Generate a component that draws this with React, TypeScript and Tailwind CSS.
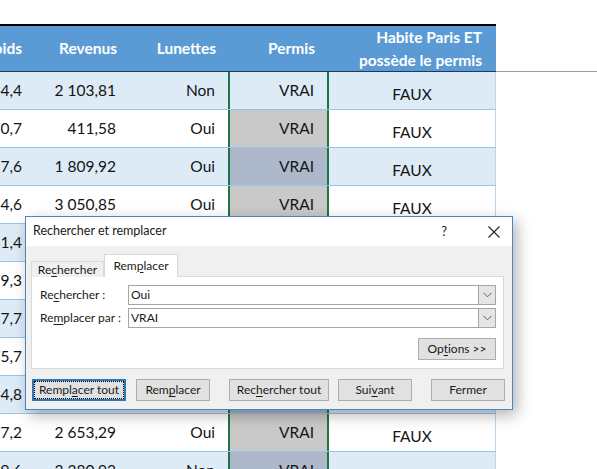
import React from "react";

const ROWS = [
  ["64,4", "2 103,81", "Non"],
  ["70,7", "411,58", "Oui"],
  ["57,6", "1 809,92", "Oui"],
  ["84,6", "3 050,85", "Oui"],
  ["61,4", "2 417,36", "Oui"],
  ["79,3", "1 954,10", "Non"],
  ["67,7", "2 880,47", "Oui"],
  ["75,7", "1 302,65", "Oui"],
  ["54,8", "2 211,09", "Non"],
  ["77,2", "2 653,29", "Oui"],
  ["69,6", "3 380,93", "Non"],
];

// underlined access key
const K = ({ children }: { children: React.ReactNode }) => (
  <span className="underline underline-offset-2 decoration-1">{children}</span>
);

function Btn({ children, w, focused = false, className = "" }: { children: React.ReactNode; w: string; focused?: boolean; className?: string }) {
  return (
    <div
      className={`${w} h-[22px] shrink-0 flex items-center justify-center bg-[#e1e1e1] ${
        focused ? "border-2 border-[#2f77b8]" : "border border-[#adadad]"
      } ${className}`}
    >
      {focused ? (
        <div className="w-full h-full flex items-center justify-center border border-dotted border-black">{children}</div>
      ) : (
        children
      )}
    </div>
  );
}

function Combo({ value }: { value: string }) {
  return (
    <div className="w-[368px] h-[20px] flex border border-[#a5a5a5] bg-white">
      <div className="flex-1 flex items-center pl-[2px]">{value}</div>
      <div className="w-[17px] h-full flex items-center justify-center bg-[#e5e5e5] border-l border-[#a5a5a5]">
        <svg width="9" height="6" viewBox="0 0 9 6" fill="none">
          <path d="M0.5 0.8 L4.5 4.8 L8.5 0.8" stroke="#606060" strokeWidth="1" />
        </svg>
      </div>
    </div>
  );
}

function Dialog() {
  return (
    <div className="absolute left-[25px] top-[216px] w-[488px] h-[194px] flex flex-col border border-[#4a86c0] bg-[#f0f0f0] shadow-[4px_5px_14px_rgba(0,0,0,0.3)] font-['Lato',sans-serif] text-[12px] text-[#1a1a1a]">
      <div className="h-[29px] shrink-0 bg-white flex items-center pl-[7px] pr-[12px]">
        <span className="text-[12.5px]">Rechercher et remplacer</span>
        <span className="ml-auto mr-[41px] text-[13px]">?</span>
        <svg width="12" height="12" viewBox="0 0 12 12">
          <path d="M0.5 0.5 L11.5 11.5 M11.5 0.5 L0.5 11.5" stroke="#222" strokeWidth="1.1" />
        </svg>
      </div>
      <div className="flex-1 flex flex-col pt-[8px] pl-[5px] pr-[8px]">
        <div className="flex items-end h-[23px] -mb-px relative z-10">
          <div className="w-[73px] h-[16px] border border-b-0 border-[#d9d9d9] bg-[#f0f0f0] flex items-center justify-center">
            <span>
              Re<K>c</K>hercher
            </span>
          </div>
          <div className="w-[74px] h-[23px] border border-b-0 border-[#d9d9d9] bg-white flex items-center justify-center pb-[1px]">
            <span>
              Rem<K>p</K>lacer
            </span>
          </div>
        </div>
        <div className="h-[93px] border border-[#d9d9d9] bg-white flex flex-col pl-[8px] pr-[6px] pt-[8px]">
          <div className="flex items-center">
            <div className="w-[88px]">
              Re<K>c</K>hercher :
            </div>
            <Combo value="Oui" />
          </div>
          <div className="flex items-center mt-[3px]">
            <div className="w-[88px]">
              Re<K>m</K>placer par :
            </div>
            <Combo value="VRAI" />
          </div>
          <div className="flex justify-end mt-[10px] pr-[1px]">
            <Btn w="w-[78px]">
              Op<K>t</K>ions &gt;&gt;
            </Btn>
          </div>
        </div>
        <div className="flex mt-[10px] pl-[1px]">
          <Btn w="w-[94px]" focused>
            Rempl<K>a</K>cer tout
          </Btn>
          <Btn w="w-[74px]" className="ml-[10px]">
            Rem<K>p</K>lacer
          </Btn>
          <Btn w="w-[100px]" className="ml-[19px]">
            Rec<K>h</K>ercher tout
          </Btn>
          <Btn w="w-[74px]" className="ml-[9px]">
            Sui<K>v</K>ant
          </Btn>
          <Btn w="w-[74px]" className="ml-[19px]">
            Fermer
          </Btn>
        </div>
      </div>
    </div>
  );
}

export default function App() {
  return (
    <div className="relative w-[597px] h-[469px] overflow-hidden bg-white font-['Lato',sans-serif] text-[15.5px] text-[#141414]">
      <div className="h-[24px]" />
      <div className="flex">
        <div className="w-[496px] shrink-0 flex flex-col">
          <div className="h-[48px] flex border-t-2 border-b border-t-black border-b-[#1f3a5a] bg-[#5b9bd5] text-white font-bold">
            <div className="w-[36px] flex items-center justify-end pr-[14px] whitespace-nowrap">Poids</div>
            <div className="w-[94px] flex items-center justify-end pr-[13px]">Revenus</div>
            <div className="w-[98px] flex items-center justify-end pr-[12px]">Lunettes</div>
            <div className="w-[101px] flex items-center justify-end pr-[14px]">Permis</div>
            <div className="w-[167px] flex flex-col items-end justify-center pr-[14px] leading-[23px]">
              <span>Habite Paris ET</span>
              <span>possède le permis</span>
            </div>
          </div>
          {ROWS.map((r, i) => {
            const odd = i % 2 === 0;
            const permisBg = i === 0 ? "bg-[#ddebf7]" : odd ? "bg-[#adb9ca]" : "bg-[#c9c9c9]";
            return (
              <div
                key={i}
                className={`h-[38px] shrink-0 flex border-b border-[#9dc3e6] ${odd ? "bg-[#ddebf7]" : "bg-white"}`}
              >
                <div className="w-[36px] flex items-center justify-end pr-[14px] whitespace-nowrap">{r[0]}</div>
                <div className="w-[94px] flex items-center justify-end pr-[14px] whitespace-nowrap">{r[1]}</div>
                <div className="w-[98px] flex items-center justify-end pr-[13px]">{r[2]}</div>
                <div className={`w-[101px] flex items-center justify-end pr-[13px] border-x-2 border-[#217346] ${permisBg}`}>
                  VRAI
                </div>
                <div className="w-[167px] flex items-end justify-center pb-[3px] border-r border-[#bdd7ee]">FAUX</div>
              </div>
            );
          })}
        </div>
        <div className="flex-1">
          <div className="h-[48px] border-b border-[#a0a0a0]" />
        </div>
      </div>
      <Dialog />
    </div>
  );
}
